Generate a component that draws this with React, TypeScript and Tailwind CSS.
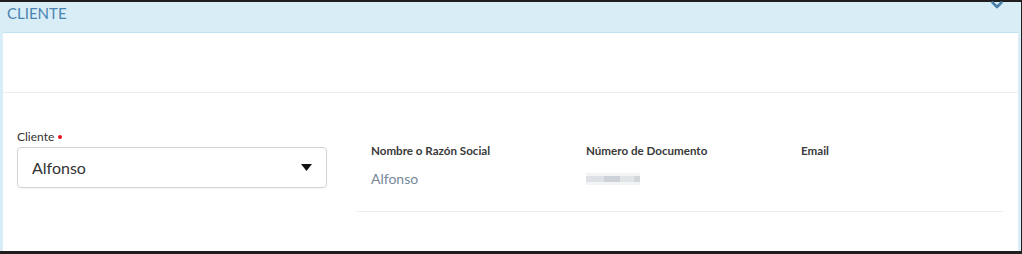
export default function App() {
  return (
    <div className="h-[254px] w-[1022px] overflow-hidden bg-[#1e1e1e] pt-[2px] font-['Lato',sans-serif]">
      <div className="h-[249px] w-[1021px] border-x-[3px] border-[#d9edf7] bg-white">
        <div className="relative flex h-[31px] items-start border-b border-[#bfe1f1] bg-[#d9edf7] px-[4px]">
          <span className="mt-[1px] text-[15px] leading-[20px] text-[#4a84b0]">CLIENTE</span>
          <svg
            className="absolute right-[14px] top-[-3px]"
            width="14"
            height="11"
            viewBox="0 0 14 11"
            fill="none"
          >
            <path d="M2.5 3.5l4.5 4.5 4.5-4.5" stroke="#4a7fa6" strokeWidth="2.6" strokeLinecap="round" strokeLinejoin="round" />
          </svg>
        </div>
        <div className="h-[60px] border-b border-[#eeeeee]" />
        <div className="flex pt-[37px]">
          <div className="ml-[14px] w-[310px] shrink-0">
            <label className="flex items-center text-[12px] leading-[14px] text-[#333]">
              Cliente
              <span className="ml-[4px] inline-block h-[4px] w-[4px] rounded-full bg-[#e5121f]" />
            </label>
            <div className="mt-[3px] flex h-[41px] items-center justify-between rounded-[4px] border border-[#cfd4d9] px-[14px] shadow-[0_1px_1px_rgba(0,0,0,0.04)]">
              <span className="text-[16px] text-[#333]">Alfonso</span>
              <svg width="11" height="7" viewBox="0 0 11 7">
                <path d="M0 0h11L5.5 7z" fill="#111" />
              </svg>
            </div>
          </div>
          <div className="ml-[29px] mt-[12px] h-[70px] w-[647px] shrink-0 border-b border-[#eeeeee]">
            <div className="flex pl-[15px] pt-[2px]">
              <div className="w-[215px] shrink-0">
                <div className="text-[11.6px] font-bold leading-[14px] text-[#3a3a3a]">Nombre o Razón Social</div>
                <div className="mt-[13px] text-[14px] leading-[16px] text-[#778899]">Alfonso</div>
              </div>
              <div className="w-[215px] shrink-0">
                <div className="text-[11.6px] font-bold leading-[14px] text-[#3a3a3a]">Número de Documento</div>
                <div className="mt-[13px] flex h-[16px] items-center">
                  <div className="flex h-[12px] w-[54px] flex-col justify-center bg-[#f3f4f6]">
                    <div className="flex h-[6px]">
                      <div className="w-[18px] bg-[#dde1e5]" />
                      <div className="w-[16px] bg-[#cdd2d8]" />
                      <div className="w-[14px] bg-[#e2e5e8]" />
                      <div className="w-[6px] bg-[#d3d7dc]" />
                    </div>
                  </div>
                </div>
              </div>
              <div className="w-[200px] shrink-0">
                <div className="text-[11.6px] font-bold leading-[14px] text-[#3a3a3a]">Email</div>
              </div>
            </div>
          </div>
        </div>
      </div>
    </div>
  );
}
